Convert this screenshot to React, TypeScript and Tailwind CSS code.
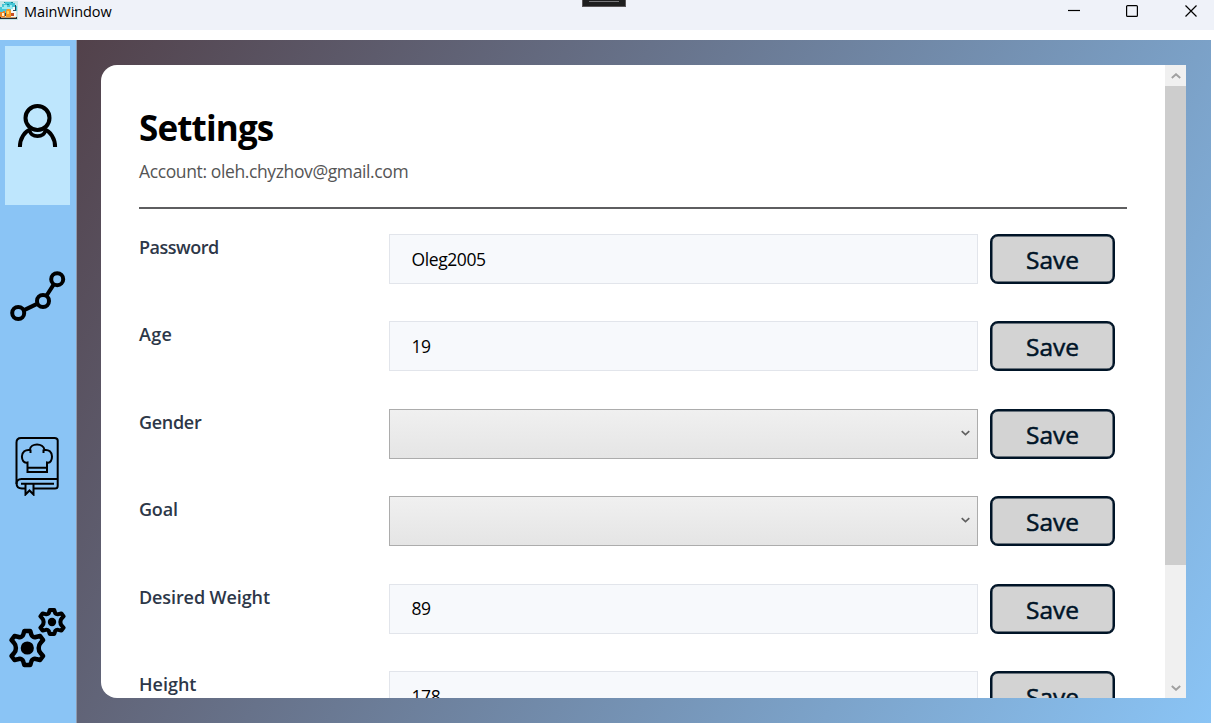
import React from "react";

type Field = { label: string; kind: "text" | "select"; value?: string; tracking: string };

const fields: Field[] = [
  { label: "Password", kind: "text", value: "Oleg2005", tracking: "tracking-[-0.5px]" },
  { label: "Age", kind: "text", value: "19", tracking: "tracking-[0.3px]" },
  { label: "Gender", kind: "select", tracking: "tracking-[-0.3px]" },
  { label: "Goal", kind: "select", tracking: "tracking-[-0.2px]" },
  { label: "Desired Weight", kind: "text", value: "89", tracking: "tracking-[-0.1px]" },
  { label: "Height", kind: "text", value: "178", tracking: "tracking-normal" },
];

function AppIcon() {
  return (
    <svg width="18" height="20" viewBox="0 0 18 20" className="shrink-0">
      <rect y="1" width="18" height="19" fill="#c5e5e6" />
      <path d="M0 7h2V4h3V2h7v1h3v3h2v5h-3v4H0z" fill="#46c6d6" />
      <path d="M2 7h2V5h3v2h3V5h2v2h1v2H2z" fill="#9ceaf0" />
      <path d="M4 2h1v1H4zM11 2h2v1h-2zM7 4h2v1H7z" fill="#168a99" />
      <path d="M0 12h3v-1h2v6H0z" fill="#e8862a" />
      <path d="M2 13h2v3H2z" fill="#fff3c9" />
      <path d="M6 11l1-2h3l1 2v6H6z" fill="#f59b25" />
      <path d="M7 11h2v3H7z" fill="#ffd35c" />
      <path d="M11 9h2V7h2v2h1v8h-5z" fill="#f4f8f5" />
      <path d="M11 13h3v3h-3z" fill="#c64f24" />
      <path d="M15 5h1v6h-1zM13 10h2v1h-2zM5 13h1v3H5z" fill="#24485c" />
      <path d="M0 17h17v2H0z" fill="#202c32" />
      <path d="M1 17h15v1H1z" fill="#c99b67" />
    </svg>
  );
}

function ProfileIcon() {
  return (
    <svg width="41" height="44" viewBox="0 0 41 44" fill="none" stroke="#000" strokeWidth="4">
      <circle cx="20.500" cy="14" r="12" />
      <path d="M2.900 43C2.900 34.500 7.500 27.200 14 25.500M38.100 43C38.100 34.500 33.500 27.200 27 25.500" />
      <path d="M12.500 26.500C14.500 34 26.500 34 28.500 26.500" strokeWidth="3.600" />
    </svg>
  );
}

function ProgressIcon() {
  return (
    <svg width="56" height="52" viewBox="0 0 56 52" fill="none" stroke="#000" strokeWidth="4">
      <circle cx="8.200" cy="43" r="6" />
      <circle cx="33" cy="31" r="6" />
      <circle cx="47.200" cy="9.200" r="6" />
      <path d="M13.600 40.400L27.600 33.600M36.300 26L43.900 14.200" />
    </svg>
  );
}

function RecipesIcon() {
  return (
    <svg width="45" height="60" viewBox="0 0 45 60" fill="none" stroke="#000" strokeWidth="2">
      <path d="M10 52.500H7C3.500 52.500 1.500 50.500 1.500 47V6.500C1.500 3.500 3.500 2 6 2H39.500C41.200 2 42.700 3 42.700 4.500V50C42.700 51.500 41.500 52.500 40 52.500H19" />
      <path d="M1.500 48C1.500 44.500 3.500 43 6.500 43H42.500M6 47.800H39" />
      <path d="M10.500 48V58.500L14.500 54.500L18.500 58.500V48" />
      <path d="M12.500 36V26.500C8.500 27.500 7 24 6.900 20.500C7 16 10.500 13.300 14.800 14C15.500 6.800 28.500 6.800 29.500 14C33.800 13.300 37 16 37 20.500C37 24 35.500 27.500 32 26.500V36H12.500Z" />
      <path d="M12.500 31.800H32M15.500 13.500V17M28.500 13.500V17" />
    </svg>
  );
}

const gearPath =
  "M-4 -13.500L-3 -17H3L4 -13.500C4.600 -11.200 6.800 -10.400 8.600 -11L12.800 -12L15.800 -8L13.200 -5C10.800 -2.500 10.800 2.500 13.200 5L15.800 8L12.800 12L8.600 11C6.800 10.400 4.600 11.200 4 13.500L3 17H-3L-4 13.500C-4.600 11.200 -6.800 10.400 -8.600 11L-12.800 12L-15.800 8L-13.200 5C-10.800 2.500 -10.800 -2.500 -13.200 -5L-15.800 -8L-12.800 -12L-8.600 -11C-6.800 -10.400 -4.600 -11.200 -4 -13.500Z";

function SettingsIcon() {
  return (
    <svg width="60" height="62" viewBox="0 0 60 62" fill="none" stroke="#000" strokeLinejoin="round">
      <g transform="translate(19.300 41)">
        <path d={gearPath} strokeWidth="4.500" />
        <circle r="6.600" fill="#000" stroke="none" />
      </g>
      <g transform="translate(44 15)">
        <path d={gearPath} strokeWidth="5.600" transform="scale(.735 .71)" />
        <circle r="4.200" fill="#000" stroke="none" />
      </g>
    </svg>
  );
}

function Chevron({ up = false, className }: { up?: boolean; className: string }) {
  return (
    <svg width="10" height="6" viewBox="0 0 10 6" fill="none" stroke="currentColor" className={className}>
      <path d={up ? "M.8 5L5 1.200L9.200 5" : "M.8 1L5 4.800L9.200 1"} strokeWidth="1.900" />
    </svg>
  );
}

function TitleBar() {
  return (
    <header className="relative flex h-[30px] items-start bg-[#eff2f9]">
      <AppIcon />
      <span className="ml-[6px] mt-px text-[14.500px] leading-[22px] tracking-[-0.08px] text-black">MainWindow</span>
      <div className="absolute left-[582px] top-0 flex h-[7px] w-[44px] justify-center border-x border-b border-[#5a5658] bg-[#1f1f1f]">
        <div className="mt-px h-px w-[30px] bg-[#77777a]" />
      </div>
      <svg width="130" height="13" viewBox="0 0 130 13" fill="none" stroke="#000" className="ml-auto mr-[16px] mt-[5px]" strokeWidth="1.200">
        <path d="M0 5.500H12" />
        <rect x="58.600" y=".6" width="10.800" height="10.800" rx="1" />
        <path d="M117.500.5L128.500 11.500M128.500.5L117.500 11.500" />
      </svg>
    </header>
  );
}

function Row({ field }: { field: Field }) {
  return (
    <div className="grid h-[87.4px] grid-cols-[250px_589px_125px] items-start">
      <label className={"text-[18px] font-semibold leading-[26px] text-[#2d3748] " + field.tracking}>{field.label}</label>
      {field.kind === "text" ? (
        <div className="flex h-[50px] items-center border border-[#e2e5eb] bg-[#f7f9fc] pl-[21.500px] text-[17.500px] tracking-[-0.4px] text-black">
          {field.value}
        </div>
      ) : (
        <div className="flex h-[50px] items-center justify-end border border-[#acacac] bg-gradient-to-b from-[#f0f0f0] to-[#e5e5e5] pr-[7px] text-[#606060]">
          <Chevron className="mb-[2px] h-[6px] w-[9px]" />
        </div>
      )}
      <button className="ml-[12px] h-[50px] w-[125px] rounded-[8px] border-2 border-[#001427] bg-[#d3d3d3] text-[24.500px] leading-[48px] text-[#001427] shadow-[inset_0_0_0_0.5px_#001427] [-webkit-text-stroke:0.5px_#001427]">
        Save
      </button>
    </div>
  );
}

export default function App() {
  return (
    <div className="flex h-[725px] w-[1214px] flex-col overflow-hidden bg-white font-['Open_Sans','Noto_Sans',sans-serif]">
      <TitleBar />
      <div className="mt-[10px] flex h-[683px] w-[1211px]">
        <nav className="flex w-[77px] shrink-0 flex-col border-r border-[#8e9aae] bg-[#8ac4f5] pl-[5px] pt-[6px]">
          <a className="flex h-[159px] w-[65px] items-center justify-center bg-[#bee6fd]"><ProfileIcon /></a>
          <a className="flex h-[170px] w-[65px] items-center justify-center pt-[12px]"><ProgressIcon /></a>
          <a className="flex h-[171px] w-[65px] items-center justify-center pt-[11px]"><RecipesIcon /></a>
          <a className="flex h-[171px] w-[65px] items-center justify-center pt-[12px]"><SettingsIcon /></a>
        </nav>
        <main className="flex-1 bg-[linear-gradient(121deg,#52414a_0%,#8ac4f5_100%)] pb-[25px] pl-[24px] pr-[25px] pt-[25px]">
          <section className="flex h-[633px] w-[1085px] overflow-hidden rounded-l-[16px] bg-white">
            <div className="flex-1 overflow-hidden pl-[38px] pt-[38px]">
              <h1 className="text-[35px] font-bold leading-[50px] tracking-[-0.85px] text-black">Settings</h1>
              <p className="mt-[5px] text-[17.500px] leading-[26px] tracking-[-0.38px] text-[#555]">Account: oleh.chyzhov@gmail.com</p>
              <hr className="mt-[23px] w-[988px] border-0 border-t-2 border-[#5e5e60]" />
              <div className="mt-[25px] w-[976px]">
                {fields.map((field) => (
                  <Row key={field.label} field={field} />
                ))}
              </div>
            </div>
            <div className="flex w-[21px] shrink-0 flex-col items-center bg-[#f0f0f0]">
              <div className="flex h-[21px] items-center justify-center text-[#a0a0a0]"><Chevron up className="mt-px" /></div>
              <div className="h-[479px] w-full bg-[#cdcdcd]" />
              <div className="mt-auto flex h-[20px] items-center justify-center text-[#a0a0a0]"><Chevron className="" /></div>
            </div>
          </section>
        </main>
      </div>
    </div>
  );
}
